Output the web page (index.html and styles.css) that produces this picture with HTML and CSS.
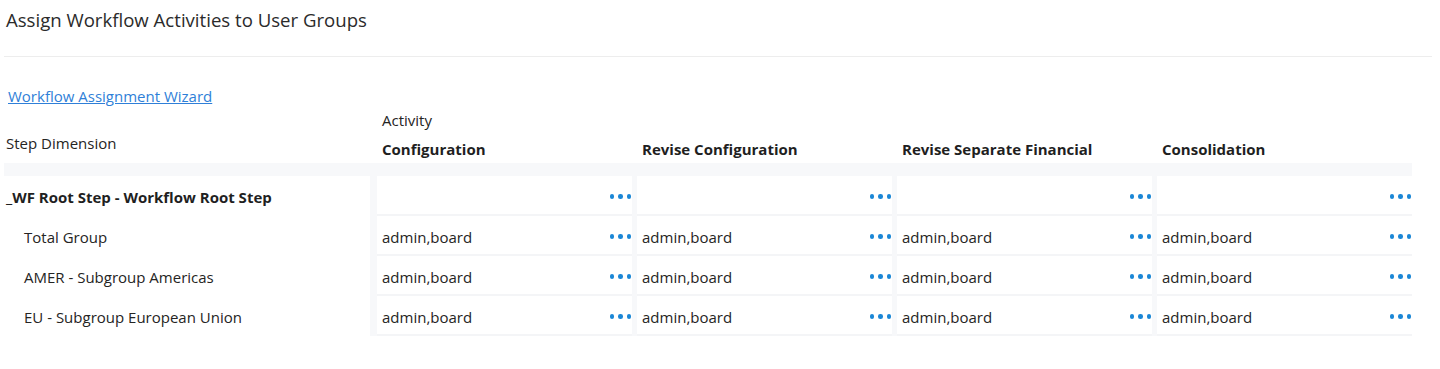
FILE: index.html
```html
<!DOCTYPE html>
<html>
<head>
<meta charset="utf-8">
<link rel="stylesheet" href="styles.css">
</head>
<body>
<div class="page">
  <header class="title-bar">
    <h1 class="title">Assign Workflow Activities to User Groups</h1>
  </header>
  <div class="link-row"><a class="wizard-link" href="#">Workflow Assignment Wizard</a></div>
  <div class="matrix">
    <div class="head">
      <div class="dim-label">Step Dimension</div>
      <div class="act-head">
        <div class="act-label">Activity</div>
        <div class="act-names">
          <div class="col-name">Configuration</div>
          <div class="col-name">Revise Configuration</div>
          <div class="col-name">Revise Separate Financial</div>
          <div class="col-name">Consolidation</div>
        </div>
      </div>
    </div>
    <div class="band"></div>
    <div class="grid">
      <div class="rowhead root">_WF Root Step - Workflow Root Step</div>
      <div class="cell"><span class="val"></span><span class="dots"><i></i><i></i><i></i></span></div>
      <div class="cell"><span class="val"></span><span class="dots"><i></i><i></i><i></i></span></div>
      <div class="cell"><span class="val"></span><span class="dots"><i></i><i></i><i></i></span></div>
      <div class="cell"><span class="val"></span><span class="dots"><i></i><i></i><i></i></span></div>

      <div class="rowhead child">Total Group</div>
      <div class="cell"><span class="val">admin,board</span><span class="dots"><i></i><i></i><i></i></span></div>
      <div class="cell"><span class="val">admin,board</span><span class="dots"><i></i><i></i><i></i></span></div>
      <div class="cell"><span class="val">admin,board</span><span class="dots"><i></i><i></i><i></i></span></div>
      <div class="cell"><span class="val">admin,board</span><span class="dots"><i></i><i></i><i></i></span></div>

      <div class="rowhead child">AMER - Subgroup Americas</div>
      <div class="cell"><span class="val">admin,board</span><span class="dots"><i></i><i></i><i></i></span></div>
      <div class="cell"><span class="val">admin,board</span><span class="dots"><i></i><i></i><i></i></span></div>
      <div class="cell"><span class="val">admin,board</span><span class="dots"><i></i><i></i><i></i></span></div>
      <div class="cell"><span class="val">admin,board</span><span class="dots"><i></i><i></i><i></i></span></div>

      <div class="rowhead child">EU - Subgroup European Union</div>
      <div class="cell"><span class="val">admin,board</span><span class="dots"><i></i><i></i><i></i></span></div>
      <div class="cell"><span class="val">admin,board</span><span class="dots"><i></i><i></i><i></i></span></div>
      <div class="cell"><span class="val">admin,board</span><span class="dots"><i></i><i></i><i></i></span></div>
      <div class="cell"><span class="val">admin,board</span><span class="dots"><i></i><i></i><i></i></span></div>
    </div>
  </div>
</div>
</body>
</html>
```

FILE: styles.css
```css
* { box-sizing: border-box; }
html, body { margin: 0; padding: 0; background: #fff; }
body {
  font-family: "Open Sans", "Noto Sans", "Liberation Sans", sans-serif;
  font-size: 15px;
  color: #252423;
}
.page { padding: 0 8px 0 4px; }

.title-bar {
  height: 57px;
  border-bottom: 1px solid #ededed;
  padding: 8px 0 0 2px;
}
.title {
  margin: 0;
  font-size: 18.6px;
  font-weight: 400;
  line-height: 24px;
  color: #2b2b2b;
}

.link-row { padding: 28px 0 0 4px; }
.wizard-link {
  color: #2f7fd8;
  text-decoration: underline;
  font-size: 15px;
  line-height: 22px;
}

.matrix { width: 1408px; }
.head {
  display: flex;
  height: 56px;
}
.dim-label {
  flex: 0 0 373px;
  padding: 26px 0 0 2px;
  line-height: 20px;
}
.act-head { flex: 0 0 1035px; display: flex; flex-direction: column; padding-top: 2px; }
.act-label { line-height: 22px; padding-left: 5px; }
.act-names { display: grid; grid-template-columns: repeat(4, 260px); padding-top: 8px; }
.col-name {
  font-weight: 700;
  padding-left: 5px;
  line-height: 20px;
  color: #1f1f1f;
  white-space: nowrap;
}

.band { height: 13px; background: #f7f8fa; }

.grid {
  display: grid;
  grid-template-columns: 368px repeat(4, 255px);
  column-gap: 5px;
  background: #f7f8fa;
}
.rowhead {
  background: #fff;
  margin-right: 2px;
  height: 40px;
  display: flex;
  align-items: center;
  padding-top: 2px;
}
.rowhead.root { font-weight: 700; padding-left: 2px; padding-top: 1px; color: #1f1f1f; }
.rowhead.child { padding-left: 20px; }
.cell {
  background: #fff;
  height: 40px;
  border-bottom: 2px solid #f4f5f7;
  display: flex;
  align-items: center;
  justify-content: space-between;
  padding: 3px 1px 0 5px;
}
.val { white-space: nowrap; }
.dots { display: flex; gap: 4px; align-items: center; }
.dots i {
  display: block;
  width: 4.5px;
  height: 4.5px;
  border-radius: 50%;
  background: #1b87d6;
}
```
